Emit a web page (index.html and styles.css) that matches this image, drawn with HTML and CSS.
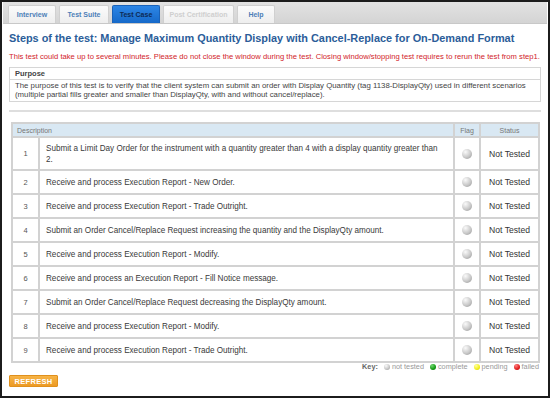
FILE: index.html
```html
<!DOCTYPE html>
<html lang="en">
<head>
  <meta charset="UTF-8">
  <title>Test Case</title>
  <link rel="stylesheet" href="styles.css">
</head>
<body>
  <div class="frame">
    <!-- Onglets -->
    <div class="tabs">
      <a class="tab">Interview</a>
      <a class="tab">Test Suite</a>
      <a class="tab active">Test Case</a>
      <a class="tab disabled">Post Certification</a>
      <a class="tab">Help</a>
    </div>

    <div class="content">
      <h1>Steps of the test: Manage Maximum Quantity Display with Cancel-Replace for On-Demand Format</h1>
      <p class="warning">This test could take up to several minutes. Please do not close the window during the test. Closing window/stopping test requires to rerun the test from step1.</p>

      <div class="purpose">
        <div class="purpose-title">Purpose</div>
        <div class="purpose-text">The purpose of this test is to verify that the client system can submit an order with Display Quantity (tag 1138-DisplayQty) used in different scenarios (multiple partial fills greater and smaller than DisplayQty, with and without cancel/replace).</div>
      </div>

      <div class="separator"></div>

      <table class="steps">
        <tr>
          <th colspan="2" class="th-desc">Description</th>
          <th class="th-flag">Flag</th>
          <th class="th-status">Status</th>
        </tr>
        <tr class="tall">
          <td class="num">1</td>
          <td class="desc">Submit a Limit Day Order for the instrument with a quantity greater than 4 with a display quantity greater than 2.</td>
          <td class="flag"><span class="dot grey"></span></td>
          <td class="status">Not Tested</td>
        </tr>
        <tr>
          <td class="num">2</td>
          <td class="desc">Receive and process Execution Report - New Order.</td>
          <td class="flag"><span class="dot grey"></span></td>
          <td class="status">Not Tested</td>
        </tr>
        <tr>
          <td class="num">3</td>
          <td class="desc">Receive and process Execution Report - Trade Outright.</td>
          <td class="flag"><span class="dot grey"></span></td>
          <td class="status">Not Tested</td>
        </tr>
        <tr>
          <td class="num">4</td>
          <td class="desc">Submit an Order Cancel/Replace Request increasing the quantity and the DisplayQty amount.</td>
          <td class="flag"><span class="dot grey"></span></td>
          <td class="status">Not Tested</td>
        </tr>
        <tr>
          <td class="num">5</td>
          <td class="desc">Receive and process Execution Report - Modify.</td>
          <td class="flag"><span class="dot grey"></span></td>
          <td class="status">Not Tested</td>
        </tr>
        <tr>
          <td class="num">6</td>
          <td class="desc">Receive and process an Execution Report - Fill Notice message.</td>
          <td class="flag"><span class="dot grey"></span></td>
          <td class="status">Not Tested</td>
        </tr>
        <tr>
          <td class="num">7</td>
          <td class="desc">Submit an Order Cancel/Replace Request decreasing the DisplayQty amount.</td>
          <td class="flag"><span class="dot grey"></span></td>
          <td class="status">Not Tested</td>
        </tr>
        <tr>
          <td class="num">8</td>
          <td class="desc">Receive and process Execution Report - Modify.</td>
          <td class="flag"><span class="dot grey"></span></td>
          <td class="status">Not Tested</td>
        </tr>
        <tr>
          <td class="num">9</td>
          <td class="desc">Receive and process Execution Report - Trade Outright.</td>
          <td class="flag"><span class="dot grey"></span></td>
          <td class="status">Not Tested</td>
        </tr>
      </table>

      <!-- Légende -->
      <div class="key">
        <b>Key:</b>
        <span class="key-item"><span class="dot small grey"></span>not tested</span>
        <span class="key-item"><span class="dot small green"></span>complete</span>
        <span class="key-item"><span class="dot small yellow"></span>pending</span>
        <span class="key-item"><span class="dot small red"></span>failed</span>
      </div>

      <button class="refresh">REFRESH</button>
    </div>
  </div>
</body>
</html>
```

FILE: styles.css
```css
* {
    box-sizing: border-box;
}
body, html {
    margin: 0;
    padding: 0;
    background: #fff;
    font-family: 'Liberation Sans', Arial, sans-serif;
    color: #333;
}
.frame {
    width: 550px;
    height: 398px;
    border: 2px solid #1c1c1c;
    padding: 0 1px;
    display: flex;
    flex-direction: column;
    overflow: hidden;
}
.tabs {
    display: flex;
    align-items: flex-end;
    gap: 3px;
    height: 22px;
    padding: 0 5px;
    background: linear-gradient(#e2e2e2, #d4d4d4);
    border-bottom: 1px solid #c8c8c8;
}
.tab {
    display: flex;
    align-items: center;
    justify-content: center;
    height: 18px;
    font-size: 7px;
    font-weight: bold;
    color: #4d7fb8;
    background: linear-gradient(#fbfbfb, #eeeeee);
    border: 1px solid #d0d0d0;
    border-bottom: none;
    border-radius: 2px 2px 0 0;
}
.tab:nth-child(1) { width: 48px; }
.tab:nth-child(2) { width: 50px; }
.tab:nth-child(3) { width: 48px; }
.tab:nth-child(4) { width: 71px; }
.tab:nth-child(5) { width: 38px; }
.tab.active {
    background: linear-gradient(#2d86e6, #1669c9);
    border-color: #1a62b8;
    color: #0d2a55;
}
.tab.disabled {
    color: #cfcfcf;
}
.content {
    padding: 0 6px;
}
h1 {
    margin: 7px 0 0 0;
    font-size: 10.9px;
    line-height: 14px;
    white-space: nowrap;
    color: #2b5d99;
}
.warning {
    margin: 7px 0 0 0;
    font-size: 7.65px;
    line-height: 9px;
    white-space: nowrap;
    color: #d2232a;
}
.purpose {
    margin-top: 6px;
    border: 1px solid #d6d6d6;
}
.purpose-title {
    font-size: 7.5px;
    font-weight: bold;
    color: #444;
    padding: 2px 5px;
    border-bottom: 1px solid #d6d6d6;
    line-height: 7px;
}
.purpose-text {
    font-size: 7.8px;
    line-height: 8.5px;
    color: #444;
    padding: 2px 5px 2px;
}
.separator {
    height: 2px;
    background: #dedede;
    margin: 8px 0 0 0;
}
.steps {
    width: 529px;
    margin: 10px 0 0 2px;
    border-collapse: collapse;
    border: 2px solid #d2d2d2;
    font-size: 8.15px;
    color: #3a3a3a;
}
.steps th {
    background: #d9e8f3;
    color: #777;
    font-weight: normal;
    font-size: 7px;
    height: 14px;
    padding: 0 4px;
    border: 2px solid #d2d2d2;
}
.th-desc {
    text-align: left;
}
.th-flag {
    width: 26px;
}
.th-status {
    width: 59px;
}
.steps td {
    height: 24px;
    border: 2px solid #d2d2d2;
    padding: 0 6px;
}
.steps tr.tall td {
    height: 33px;
}
.steps td.num {
    width: 27px;
    text-align: center;
    color: #555;
    font-size: 7.5px;
}
.steps td.desc {
    line-height: 11px;
    padding-right: 14px;
}
.steps td.flag,
.steps td.status {
    text-align: center;
    padding: 0;
}
.steps td.status {
    font-size: 8.6px;
    color: #333;
}
.dot {
    display: inline-block;
    width: 10px;
    height: 10px;
    border-radius: 50%;
    vertical-align: middle;
}
.dot.grey {
    background: radial-gradient(circle at 35% 30%, #fafafa 0%, #c9c9c9 55%, #8f8f8f 100%);
}
.dot.green {
    background: radial-gradient(circle at 35% 30%, #6fd86f 0%, #139a13 60%, #0a6b0a 100%);
}
.dot.yellow {
    background: radial-gradient(circle at 35% 30%, #ffffa0 0%, #f2ef1a 60%, #c4c000 100%);
}
.dot.red {
    background: radial-gradient(circle at 35% 30%, #ff8080 0%, #e01b1b 60%, #a80000 100%);
}
.dot.small {
    width: 6px;
    height: 6px;
    margin-right: 2px;
}
.key {
    display: flex;
    justify-content: flex-end;
    align-items: center;
    gap: 6px;
    margin-top: -1px;
    height: 9px;
    padding-right: 2px;
    font-size: 7.3px;
    color: #999;
}
.key b {
    color: #666;
}
.key-item {
    display: flex;
    align-items: center;
}
.refresh {
    display: block;
    margin-top: 4px;
    width: 49px;
    height: 12px;
    padding: 0;
    border: 1px solid #e0901c;
    border-radius: 1px;
    background: linear-gradient(#f7b446, #ec9a24);
    color: #fff;
    font-family: 'Liberation Sans', Arial, sans-serif;
    font-size: 7.5px;
    font-weight: bold;
    letter-spacing: 0.3px;
}
```
